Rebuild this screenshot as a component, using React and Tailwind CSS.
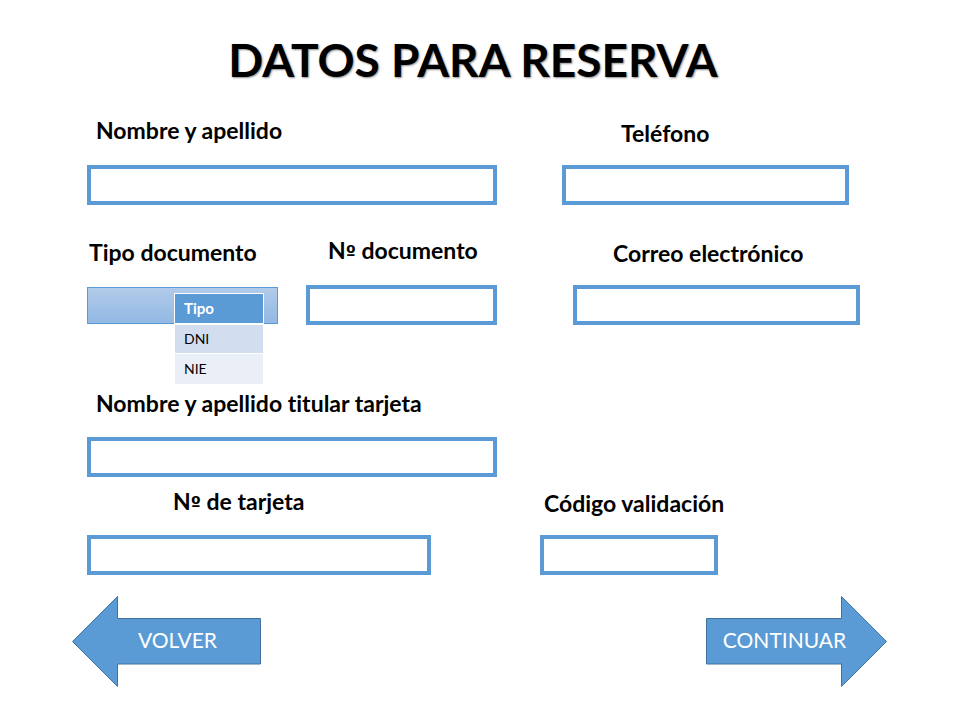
import { useState } from 'react';

const LABEL = 'text-[23px] leading-7 font-bold whitespace-nowrap [font-variant-ligatures:none]';
const INPUT =
  'block h-10 w-full min-w-0 border-4 border-[#5b9bd5] bg-white px-2 text-lg outline-none focus:border-[#41719c]';

function Numero() {
  return (
    <>
      N<span className="font-['DejaVu_Sans',sans-serif] text-lg leading-none">º</span>
    </>
  );
}

function Field({ id, label, type = 'text', className, labelClass }) {
  return (
    <div className={`flex min-w-0 flex-col ${className}`}>
      <label htmlFor={id} className={`${LABEL} ${labelClass}`}>
        {label}
      </label>
      <input id={id} name={id} type={type} className={INPUT} />
    </div>
  );
}

function DocumentType() {
  const [value, setValue] = useState('');
  return (
    <div className="flex min-w-0 flex-col gap-[21px] pb-px">
      <label htmlFor="tipo" className={`${LABEL} pl-0.5`}>
        Tipo documento
      </label>
      <div className="relative">
        <select
          id="tipo"
          value={value}
          onChange={(e) => setValue(e.target.value)}
          className="block h-[37px] w-full appearance-none border border-[#5b9bd5] bg-linear-to-b from-[#b1cbe9] to-[#92b9e4] px-2 text-sm outline-none"
        >
          <option value=""></option>
          <option value="DNI">DNI</option>
          <option value="NIE">NIE</option>
        </select>
        <div className="absolute top-1.5 right-3.5 z-10 w-[90px] border border-white bg-white text-sm">
          <div className="mb-0.5 h-[29px] bg-[#5b9bd5] pl-[9px] text-[15px] leading-[29px] font-bold text-white">
            Tipo
          </div>
          <button
            type="button"
            onClick={() => setValue('DNI')}
            className="mb-px block h-7 w-full bg-[#d2deef] pl-[9px] text-left"
          >
            DNI
          </button>
          <button
            type="button"
            onClick={() => setValue('NIE')}
            className="block h-[30px] w-full bg-[#eaeff7] pl-[9px] text-left"
          >
            NIE
          </button>
        </div>
      </div>
    </div>
  );
}

function ArrowButton({ label, points, viewBox, sizeClass, textClass, type }) {
  return (
    <button type={type} className={`grid cursor-pointer place-items-center ${sizeClass}`}>
      <svg viewBox={viewBox} className="col-start-1 row-start-1 size-full" aria-hidden="true">
        <polygon points={points} fill="#5b9bd5" stroke="#41719c" strokeWidth="1" />
      </svg>
      <span className={`col-start-1 row-start-1 pb-1 text-[21px] leading-7 text-white ${textClass}`}>{label}</span>
    </button>
  );
}

export default function App() {
  return (
    <main className="min-h-screen bg-white pt-7 font-[Lato,sans-serif] text-black">
      <h1 className="pr-3.5 text-center text-[46px] leading-16 font-bold [text-shadow:1px_1px_2px_rgb(0_0_0/0.45)]">
        DATOS PARA RESERVA
      </h1>
      <form onSubmit={(e) => e.preventDefault()}>
        <div className="mt-6 grid grid-cols-[410fr_287fr] items-end gap-[65px] pr-[111px] pl-[87px]">
          <Field id="nombre" label="Nombre y apellido" className="gap-[21px]" labelClass="pl-[9px]" />
          <Field id="telefono" type="tel" label="Teléfono" className="gap-[18px]" labelClass="pl-[59px]" />
        </div>
        <div className="mt-[31px] grid grid-cols-[410fr_287fr] items-end gap-[76px] pr-[100px] pl-[87px]">
          <div className="grid grid-cols-2 items-end gap-7">
            <DocumentType />
            <Field
              id="documento"
              label={<><Numero /> documento</>}
              className="gap-[21px]"
              labelClass="pl-[22px]"
            />
          </div>
          <Field id="correo" type="email" label="Correo electrónico" className="gap-[18px]" labelClass="pl-10" />
        </div>
        <div className="mt-16 grid grid-cols-[410fr_287fr] gap-[65px] pr-[111px] pl-[87px]">
          <Field id="titular" label="Nombre y apellido titular tarjeta" className="gap-5" labelClass="pl-[9px]" />
        </div>
        <div className="mt-2.5 grid grid-cols-[344fr_178fr] items-end gap-[109px] pr-[242px] pl-[87px]">
          <Field id="tarjeta" label={<><Numero /> de tarjeta</>} className="gap-5" labelClass="pl-[86px]" />
          <Field id="codigo" label="Código validación" className="gap-[18px]" labelClass="pl-1" />
        </div>
        <div className="mt-[21px] flex justify-between pr-[73px] pl-[72px]">
          <ArrowButton
            type="button"
            label="VOLVER"
            viewBox="0 0 189 91"
            points="0.5,45.5 45.5,0.5 45.5,22.5 188.5,22.5 188.5,68 45.5,68 45.5,90.5"
            sizeClass="h-[91px] w-[189px]"
            textClass="pl-[22px]"
          />
          <ArrowButton
            type="submit"
            label="CONTINUAR"
            viewBox="0 0 181 91"
            points="180.5,45.5 135.5,0.5 135.5,22.5 0.5,22.5 0.5,68 135.5,68 135.5,90.5"
            sizeClass="h-[91px] w-[181px]"
            textClass="pr-6"
          />
        </div>
      </form>
    </main>
  );
}
